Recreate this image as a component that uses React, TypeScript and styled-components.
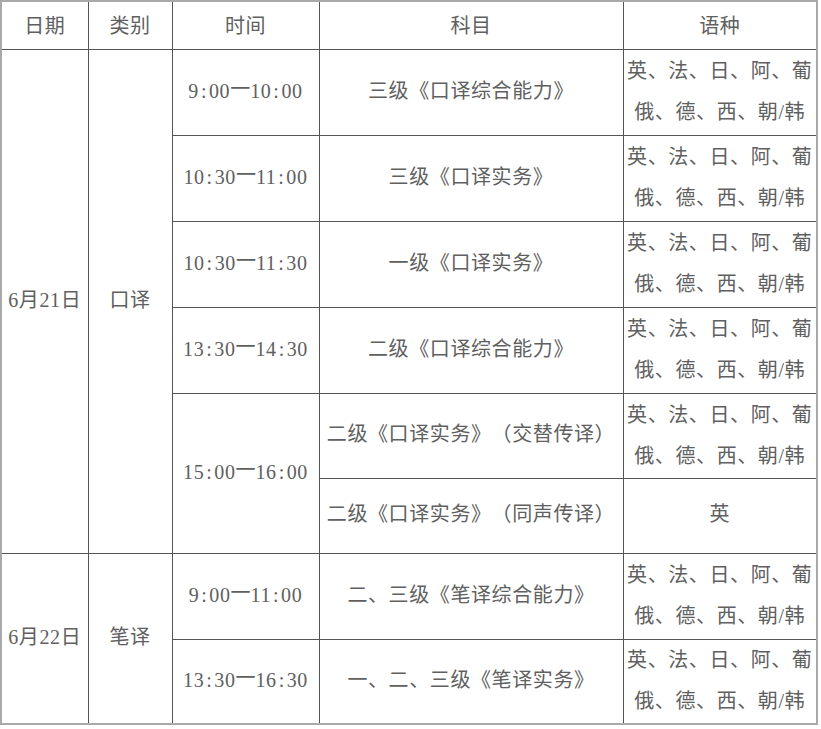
import React, { FC } from "react";
import styled, { createGlobalStyle } from "styled-components";

const GlobalStyle = createGlobalStyle`
  html, body {
    margin: 0;
    padding: 0;
    background: #ffffff;
  }
`;

const Sheet = styled.table`
  border-collapse: collapse;
  table-layout: fixed;
  width: 818px;
  border: 2px solid #a9a9a9;
  font-family: "Liberation Serif", "Noto Sans CJK SC", serif;
  font-size: 20px;
  color: #606060;
  text-spacing-trim: space-all;
`;

const Row = styled.tr<{ $h: number }>`
  height: ${(p) => p.$h}px;
`;

const HeadCell = styled.th`
  border: 1px solid #555;
  font-weight: 400;
  text-align: center;
  vertical-align: middle;
  padding: 0 0 2px;
  letter-spacing: 0.6px;
`;

const Cell = styled.td<{ $lang?: boolean }>`
  border: 1px solid #555;
  text-align: center;
  vertical-align: middle;
  padding: 0 0 ${(p) => (p.$lang ? "0" : "3px")};
  letter-spacing: 0.6px;
  white-space: nowrap;
  line-height: ${(p) => (p.$lang ? "41px" : "24px")};
`;

const Colon = styled.span`
  display: inline-block;
  width: 0.5em;
  text-align: center;
`;

const Dash = styled.span`
  display: inline-block;
  width: 1em;
  text-align: center;
  transform: translateY(-0.1em);
`;

const Time: FC<{ value: string }> = ({ value }) => (
  <>
    {value.split("").map((ch, i) =>
      ch === ":" ? (
        <Colon key={i}>:</Colon>
      ) : ch === "一" ? (
        <Dash key={i}>一</Dash>
      ) : (
        <React.Fragment key={i}>{ch}</React.Fragment>
      )
    )}
  </>
);

const Langs: FC = () => (
  <Cell $lang>
    英、法、日、阿、葡
    <br />
    俄、德、西、朝/韩
  </Cell>
);

const App: FC = () => {
  return (
    <>
      <GlobalStyle />
      <Sheet>
        <colgroup>
          <col style={{ width: 87 }} />
          <col style={{ width: 84 }} />
          <col style={{ width: 147 }} />
          <col style={{ width: 304 }} />
          <col style={{ width: 194 }} />
        </colgroup>
        <thead>
          <Row $h={48}>
            <HeadCell>日期</HeadCell>
            <HeadCell>类别</HeadCell>
            <HeadCell>时间</HeadCell>
            <HeadCell>科目</HeadCell>
            <HeadCell>语种</HeadCell>
          </Row>
        </thead>
        <tbody>
          <Row $h={86}>
            <Cell rowSpan={6}>6月21日</Cell>
            <Cell rowSpan={6}>口译</Cell>
            <Cell><Time value="9:00一10:00" /></Cell>
            <Cell>三级《口译综合能力》</Cell>
            <Langs />
          </Row>
          <Row $h={86}>
            <Cell><Time value="10:30一11:00" /></Cell>
            <Cell>三级《口译实务》</Cell>
            <Langs />
          </Row>
          <Row $h={86}>
            <Cell><Time value="10:30一11:30" /></Cell>
            <Cell>一级《口译实务》</Cell>
            <Langs />
          </Row>
          <Row $h={86}>
            <Cell><Time value="13:30一14:30" /></Cell>
            <Cell>二级《口译综合能力》</Cell>
            <Langs />
          </Row>
          <Row $h={85}>
            <Cell rowSpan={2}><Time value="15:00一16:00" /></Cell>
            <Cell>二级《口译实务》（交替传译）</Cell>
            <Langs />
          </Row>
          <Row $h={75}>
            <Cell>二级《口译实务》（同声传译）</Cell>
            <Cell>英</Cell>
          </Row>
          <Row $h={86}>
            <Cell rowSpan={2}>6月22日</Cell>
            <Cell rowSpan={2}>笔译</Cell>
            <Cell><Time value="9:00一11:00" /></Cell>
            <Cell>二、三级《笔译综合能力》</Cell>
            <Langs />
          </Row>
          <Row $h={85}>
            <Cell><Time value="13:30一16:30" /></Cell>
            <Cell>一、二、三级《笔译实务》</Cell>
            <Langs />
          </Row>
        </tbody>
      </Sheet>
    </>
  );
};

export default App;
